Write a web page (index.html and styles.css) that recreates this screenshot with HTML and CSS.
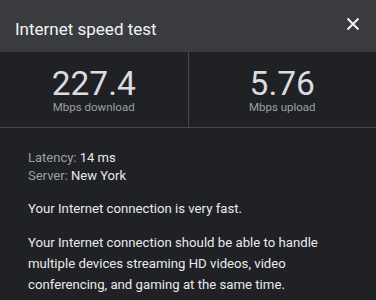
FILE: index.html
```html
<!DOCTYPE html>
<html lang="en">

<head>
    <meta charset="UTF-8">
    <meta name="viewport" content="width=device-width, initial-scale=1.0">
    <title>Internet speed test</title>
    <link rel="stylesheet" href="styles.css">
</head>

<body>
    <div class="header">
        <h1>Internet speed test</h1>
        <span class="close-button">
            <svg width="14" height="14" viewBox="0 0 14 14">
                <path d="M1.5 1.5 L12.5 12.5 M12.5 1.5 L1.5 12.5" stroke="#f1f3f4" stroke-width="2" fill="none" />
            </svg>
        </span>
    </div>

    <div class="stats">
        <div class="stat">
            <div class="stat-value">227.4</div>
            <div class="stat-label">Mbps download</div>
        </div>
        <div class="stat">
            <div class="stat-value">5.76</div>
            <div class="stat-label">Mbps upload</div>
        </div>
    </div>

    <div class="content">
        <div class="details">
            <div><span class="label">Latency:</span> 14 ms</div>
            <div><span class="label">Server:</span> New York</div>
        </div>
        <p>Your Internet connection is very fast.</p>
        <p>Your Internet connection should be able to handle multiple devices streaming HD videos, video conferencing, and gaming at the same time.</p>
    </div>
</body>

</html>
```

FILE: styles.css
```css
body {
    font-family: Roboto, "Liberation Sans", sans-serif;
    margin: 0;
    background-color: #202124;
    color: #e8eaed;
}

/* Header bar */
.header {
    background-color: #3a3b3e;
    height: 52px;
    display: flex;
    justify-content: space-between;
    align-items: flex-start;
    padding: 0 16px 0 15px;
    box-sizing: border-box;
}

.header h1 {
    margin: 0;
    padding-top: 19px;
    font-size: 17px;
    font-weight: 400;
    line-height: 20px;
    color: #f1f3f4;
}

.close-button {
    margin-top: 17px;
    width: 14px;
    height: 14px;
    display: flex;
}

/* Speed numbers */
.stats {
    display: flex;
    border-bottom: 1px solid #46474a;
}

.stat {
    flex: 1;
    text-align: center;
    padding: 16px 0 13px;
}

.stat:first-child {
    border-right: 1px solid #46474a;
}

.stat-value {
    font-size: 33.5px;
    line-height: 32px;
    color: #dadce0;
}

.stat-label {
    font-size: 11.5px;
    line-height: 14px;
    color: #9aa0a6;
}

/* Details */
.content {
    padding: 21px 28px 0;
}

.details {
    font-size: 13px;
    line-height: 18px;
}

.label {
    color: #9aa0a6;
}

.content p {
    margin: 13px 0 0;
    font-size: 13.2px;
    line-height: 21px;
}
```
